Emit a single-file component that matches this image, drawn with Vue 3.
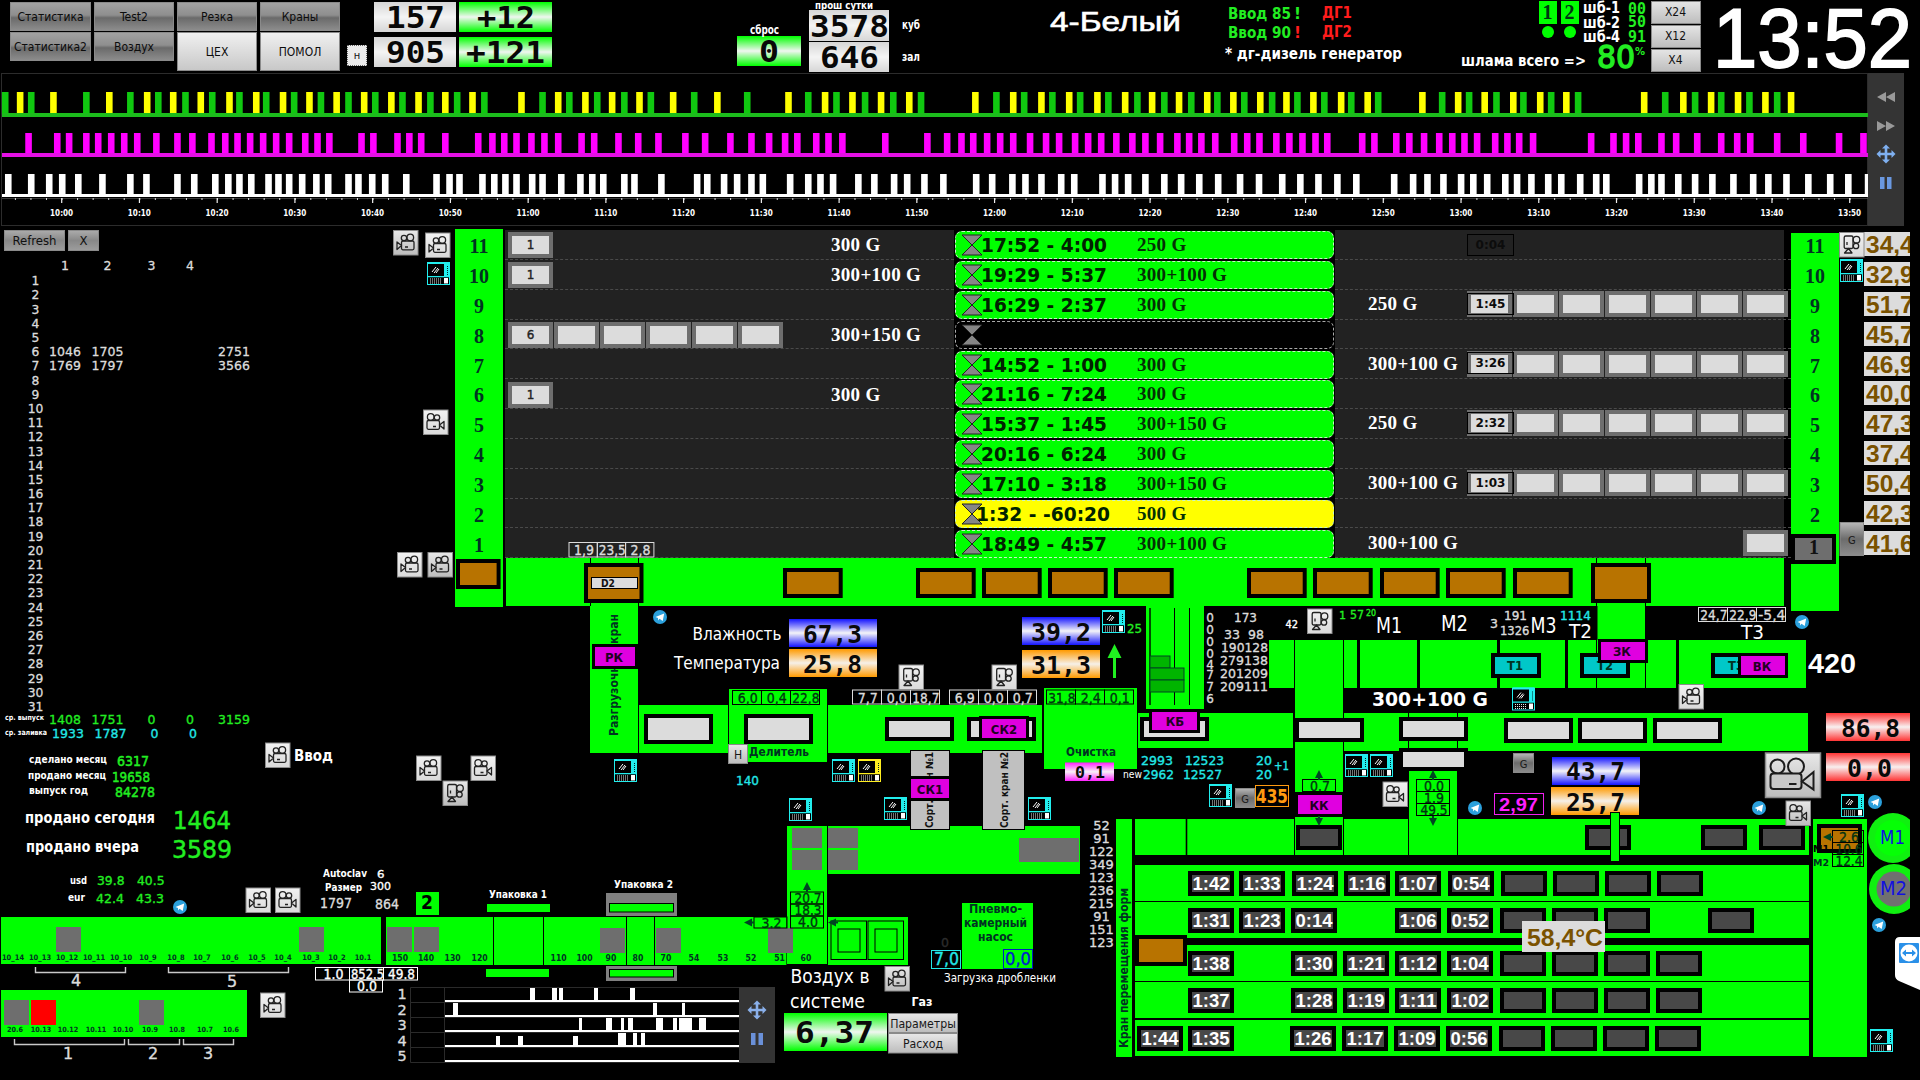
<script setup>
import { h } from 'vue'

/* A label stretched to an exact width, as the panel's fixed-size captions are. */
const Fit = (p) =>
  h('svg', { width: p.w, height: p.h, style: 'display:block;overflow:visible;flex:none' }, [
    h('text', { x: 0, y: p.b ?? p.h, textLength: p.w, lengthAdjust: 'spacingAndGlyphs', fill: 'currentColor', style: `font-size:${p.s}px` }, p.t),
  ])
Fit.props = ['t', 'w', 's', 'h', 'b']

/* ---------- trend ---------- */
const spread = (parts) => parts.flatMap(([offset, scale, xs]) => xs.map((x) => offset + x / scale))
const A = [0, 2.613], B = [600, 2.376], C = [1260, 2.376]
const cycle = spread([
  [...A, [5, 44, 73, 131, 217, 277, 332, 376, 405, 444, 476, 516, 546, 591, 617, 661, 687, 731, 760, 800, 830, 871, 902, 943, 972, 1014, 1043, 1085, 1116, 1155, 1186, 1226, 1257, 1354, 1409, 1450, 1479, 1521, 1552]],
  [...B, [21, 50, 86, 113, 166, 216, 271, 342, 440, 487, 527, 554, 592, 622, 660, 689, 727, 755, 884, 934, 974, 1000, 1041, 1067, 1107, 1133, 1174, 1200, 1240, 1269, 1304, 1333, 1368, 1397, 1435, 1459, 1497, 1523, 1561]],
  [...C, [21, 55, 81, 119, 145, 185, 209, 248, 273, 378, 425, 463, 489, 526, 554, 594, 618, 658, 684, 720, 748, 905, 955, 998, 1026, 1064, 1088, 1128, 1155, 1193, 1221, 1254]],
])
const magenta = spread([
  [...A, [66, 141, 172, 217, 248, 282, 316, 350, 400, 455, 494, 544, 580, 612, 645, 679, 713, 747, 789, 821, 852, 936, 967, 1030, 1061, 1092, 1155, 1241, 1278, 1309, 1341, 1380, 1414, 1450, 1511, 1544]],
  [...B, [36, 83, 131, 195, 242, 302, 352, 394, 432, 461, 506, 535, 568, 670, 770, 817, 851, 879, 912, 943, 974, 1014, 1052, 1083, 1121, 1152, 1183, 1219, 1257, 1288, 1323, 1364, 1392, 1421, 1454, 1499, 1530, 1559]],
  [...C, [31, 62, 93, 124, 152, 235, 264, 316, 347, 382, 418, 449, 478, 508, 551, 580, 608, 641, 779, 832, 862, 891, 946, 981, 1031, 1088, 1126, 1157, 1221, 1283, 1368, 1426]],
])
const white = spread([
  [...A, [13, 73, 120, 154, 196, 259, 332, 374, 455, 499, 554, 588, 617, 648, 693, 719, 747, 781, 818, 849, 902, 928, 964, 998, 1053, 1132, 1166, 1192, 1252, 1283, 1312, 1341, 1382, 1409, 1458, 1508, 1539]],
  [...B, [0, 50, 74, 138, 223, 247, 287, 318, 352, 379, 444, 487, 516, 546, 606, 644, 691, 722, 763, 808, 886, 924, 972, 1003, 1041, 1088, 1119, 1186, 1216, 1247, 1288, 1333, 1373, 1416, 1461, 1513, 1558]],
  [...C, [45, 88, 131, 176, 221, 311, 356, 390, 428, 470, 499, 532, 575, 603, 637, 677, 708, 753, 791, 815, 893, 922, 946, 986, 1026, 1067, 1117, 1164, 1200, 1243, 1295, 1347, 1390, 1437]],
])
const hours = Array.from({ length: 24 }, (_, i) => ({
  x: 61.6 + i * 77.74,
  t: `${10 + Math.floor(i / 6)}:${i % 6}0`,
}))
const minors = Array.from({ length: 119 }, (_, i) => 14.9 + i * 15.548)

/* ---------- monthly table ---------- */
const days = Array.from({ length: 31 }, (_, i) => {
  const d = { n: i + 1, v: ['', '', '', '', ''] }
  if (i === 5) d.v = ['1046', '1705', '', '', '2751']
  if (i === 6) d.v = ['1769', '1797', '', '', '3566']
  return d
})
const totals = [
  { pad: 29, l: 'сделано месяц', lw: 78, ls: 11, gap: 10, v: '6317', vw: 32, vs: 14, h: 16 },
  { pad: 28, l: 'продано месяц', lw: 78, ls: 11, gap: 6, v: '19658', vw: 38, vs: 14, h: 16 },
  { pad: 29, l: 'выпуск год', lw: 59, ls: 11, gap: 27, v: '84278', vw: 40, vs: 14, h: 15 },
  { pad: 25, l: 'продано сегодня', lw: 130, ls: 16, gap: 18, v: '1464', vw: 58, vs: 24.5, h: 32 },
  { pad: 26, l: 'продано вчера', lw: 113, ls: 16, gap: 33, v: '3589', vw: 60, vs: 24.5, h: 29 },
]

/* ---------- autoclaves ---------- */
const autoclaves = [
  { n: 11, cells: 1, first: '1', load: '300 G', time: '17:52 - 4:00', mid: '250 G', badge: '0:04', out: 0, temp: '34,4' },
  { n: 10, cells: 1, first: '1', load: '300+100 G', time: '19:29 - 5:37', mid: '300+100 G', out: 0, temp: '32,9' },
  { n: 9, cells: 0, time: '16:29 - 2:37', mid: '300 G', unload: '250 G', badge: '1:45', out: 7, temp: '51,7' },
  { n: 8, cells: 6, first: '6', load: '300+150 G', time: '', mid: '', out: 0, temp: '45,7' },
  { n: 7, cells: 0, time: '14:52 - 1:00', mid: '300 G', unload: '300+100 G', badge: '3:26', out: 7, temp: '46,9' },
  { n: 6, cells: 1, first: '1', load: '300 G', time: '21:16 - 7:24', mid: '300 G', out: 0, temp: '40,0' },
  { n: 5, cells: 0, time: '15:37 - 1:45', mid: '300+150 G', unload: '250 G', badge: '2:32', out: 7, temp: '47,3' },
  { n: 4, cells: 0, time: '20:16 - 6:24', mid: '300 G', out: 0, temp: '37,4' },
  { n: 3, cells: 0, time: '17:10 - 3:18', mid: '300+150 G', unload: '300+100 G', badge: '1:03', out: 7, temp: '50,4' },
  { n: 2, cells: 0, time: '1:32 - -60:20', mid: '500 G', out: 0, temp: '42,3' },
  { n: 1, cells: 0, time: '18:49 - 4:57', mid: '300+100 G', unload: '300+100 G', out: 1, temp: '41,6' },
]

/* ---------- mimic ---------- */
const L = '#00ff00', K = '#000', G = '#6e6e6e', W = '#dcdcdc', BR = '#b87300', MG = '#e000e0', CY = '#00c8c8', D = '#484848'
/* x, y, right, bottom, fill */
const areas = [
  [506, 558, 1784, 606, L], [1784, 558, 1791, 611, K],
  [590, 603, 638, 753, L], [639, 705, 728, 753, L], [729, 689, 827, 762, L], [828, 705, 1042, 753, L], [1044, 688, 1137, 769, L],
  [787, 826, 827, 964, L], [828, 826, 1080, 874, L], [386, 917, 786.4, 965, L], [828, 917, 908, 965, L], [1, 917, 381, 964, L], [1, 990, 247, 1037, L],
  [416, 892, 439, 915, L], [962, 903, 1033, 969, L], [1116, 819, 1132, 1057, L],
  [1146, 603.5, 1204, 709, L], [1269, 640, 1294, 688, L], [1344, 640, 1357, 688, L], [1360, 640, 1417, 688, L], [1420, 640, 1497, 688, L], [1500, 640, 1565, 688, L],
  [1568, 640, 1676, 688, L], [1679, 640, 1806, 688, L], [1597.5, 603, 1645, 688, L],
  [1138, 713, 1293, 748, L], [1344, 713, 1808, 751, L],
  [1135, 819, 1809, 855, L], [1135, 865, 1809, 901, L], [1135, 902, 1809, 938, L], [1135, 945, 1809, 981, L], [1135, 982, 1809, 1018, L], [1135, 1020, 1809, 1056, L],
  [1295, 640, 1343.5, 855, L], [1409, 771, 1457, 855, L], [1813, 819, 1867, 1057, L],
  [792, 828, 822, 848, G], [792, 850, 822, 870, G], [828, 828, 858, 848, G], [828, 850, 858, 870, G], [1019, 838, 1079, 862, G],
  [487, 904, 550, 912, L], [486, 969, 549, 977, L], [606, 893, 677, 916, '#808080'], [606, 966, 677, 981, '#808080'],
  [56, 927, 81, 952, G], [299, 927, 324, 952, G], [387, 927, 412, 952, G], [414, 927, 439, 952, G], [600, 928, 625, 953, G], [656, 928, 681, 953, G], [768, 928, 793, 953, G],
  [4, 1000, 29, 1025, G], [31, 1000, 56, 1025, '#ff0000'], [139, 1000, 164, 1025, G],
]
/* x1, y1, x2, y2, width */
const rules = [
  [590.5, 558, 590.5, 606, 1], [638.5, 558, 638.5, 753, 1], [1596.5, 558, 1596.5, 688, 1], [1645.5, 558, 1645.5, 688, 1], [728.5, 705, 728.5, 753, 1],
  [493.5, 917, 493.5, 965, 1], [543.5, 917, 543.5, 965, 1], [626.5, 917, 626.5, 965, 1], [654.5, 917, 654.5, 965, 1],
  [1150, 608, 1150, 705, 1.4], [1174.5, 608, 1174.5, 705, 1], [1189.5, 608, 1189.5, 705, 1],
  [1294.5, 640, 1294.5, 855, 1], [1343.5, 640, 1343.5, 855, 1], [1408.5, 713, 1408.5, 855, 1], [1457.5, 713, 1457.5, 855, 1], [1186.5, 819, 1186.5, 855, 1.6],
]
/* outlined boxes: x, y, right, bottom, fill, stroke, stroke width */
const outlines = [
  [609.5, 903.5, 673.5, 912, L, K, 1], [609.5, 969.5, 673.5, 977, L, K, 1],
  [831, 921, 866.5, 959.5, 'none', K, 1], [838, 929, 860, 952, 'none', K, 1], [868, 921, 903.5, 959.5, 'none', K, 1], [875, 929, 897, 952, 'none', K, 1],
  [1150, 656, 1170, 668, '#00b400', '#042', 1], [1150, 668, 1184, 680, '#00b400', '#042', 1], [1150, 680, 1184, 692, '#00b400', '#042', 1],
  [910.5, 750.5, 949.5, 829.5, '#c0c0c0', K, 1], [982.5, 750.5, 1024.5, 829.5, '#c0c0c0', K, 1],
]
/* vehicles and forms: x, y, w, h, fill */
const boxes = [
  [456, 559, 44.6, 30, BR], [584, 563, 59.5, 40, BR],
  ...[783, 916, 982, 1048, 1114, 1247, 1313, 1380, 1446, 1513].map((x) => [x, 568, 59.7, 30, BR]),
  [1591, 563, 60, 40, BR], [1791, 534, 45, 30, G],
  [644, 714, 69, 30, W], [744, 714, 69, 30, W], [885, 717, 69, 24, W], [967, 717, 69, 24, W], [1140, 717, 69, 24, W],
  [1295, 718, 69, 24, W], [1399, 717, 69, 24, W], [1399, 748, 69, 23, W], [1504, 718, 69, 25, W], [1578, 718, 69, 25, W], [1653, 718, 69, 25, W],
  [1491, 653, 50, 25, CY], [1580, 653, 50, 25, CY], [1711, 653, 50, 25, CY],
  [1135, 935, 52, 31, BR], [1817, 824, 45, 29, BR],
  [1296, 825, 46, 25, D], [1585, 825, 46, 25, D], [1701, 825, 46, 25, D], [1759, 825, 46, 25, D],
]
const tags = [
  [592, 644, 46, 25, 'РК', 614], [979, 716, 50, 25, 'СК2', 1004], [908, 776, 44, 25, 'СК1', 930], [1149, 709, 51, 24, 'КБ', 1175],
  [1295, 792, 50, 25, 'КК', 1319], [1598, 639, 50, 24, 'ЗК', 1622], [1738, 653, 50, 25, 'ВК', 1762],
]
const mk = (y, xs, ts) => xs.map((x, i) => ({ x, y, t: ts[i] || '' }))
const forms = [
  ...mk(871, [1188, 1239, 1292, 1344, 1395, 1448, 1501, 1553, 1605, 1657], ['1:42', '1:33', '1:24', '1:16', '1:07', '0:54']),
  ...mk(908, [1188, 1239, 1291, 1395, 1447, 1500, 1552, 1604, 1708], ['1:31', '1:23', '0:14', '1:06', '0:52']),
  ...mk(951, [1188, 1291, 1343, 1395, 1447, 1500, 1552, 1604, 1656], ['1:38', '1:30', '1:21', '1:12', '1:04']),
  ...mk(988, [1188, 1291, 1343, 1395, 1447, 1500, 1552, 1604, 1656], ['1:37', '1:28', '1:19', '1:11', '1:02']),
  ...mk(1026, [1137, 1188, 1290, 1342, 1394, 1446, 1499, 1551, 1603, 1655], ['1:44', '1:35', '1:26', '1:17', '1:09', '0:56']),
]
/* gradient readouts: x, y, right, bottom, gradient, value, text x, text width, baseline, size */
const readouts = [
  [789, 619, 877, 647, 'blue', '67,3', 803, 59, 643, 25], [789, 649, 877, 677, 'orange', '25,8', 803, 59, 673, 25],
  [1022, 617, 1100, 645, 'blue', '39,2', 1031, 60, 641, 25], [1022, 650, 1100, 678, 'orange', '31,3', 1031, 60, 674, 25],
  [1065, 762.5, 1114, 781, 'pink', '0,1', 1075, 30, 777.5, 16],
  [1552, 757, 1640, 785, 'blue', '43,7', 1566, 59, 780, 25], [1551, 787, 1639, 815, 'orange', '25,7', 1566, 59, 811, 25],
  [1826, 713, 1910, 741, 'red', '86,8', 1841, 59, 737, 25], [1826, 753, 1910, 781, 'red', '0,0', 1847, 45, 777, 25],
  [784, 1013, 887, 1051, 'green', '6,37', 795, 79, 1043, 30],
]
/* distance meters: x, y, cell w, cell h, values, text colour, line colour */
const meters = [
  [569, 542.5, 28.3, 14.5, ['1,9', '23,5', '2,8'], W, W], [732.5, 690.5, 29, 14, ['6,0', '0,4', '22,8'], '#031', K],
  [852.5, 690, 29, 14, ['7,7', '0,0', '18,7'], W, W], [949.5, 690, 29, 14, ['6,9', '0,0', '0,7'], W, W],
  [1046.5, 690, 29, 14, ['31,8', '2,4', '0,1'], '#031', K], [1698.5, 607.5, 29, 14, ['24,7', '22,9', '-5,4'], W, W],
  [315.5, 967.5, 34, 12.5, ['1.0', '852.5', '49.8'], '#fff', '#fff'], [349.5, 980, 33, 12, ['0.0'], '#fff', '#fff'],
  [790.5, 892, 33, 12, ['20.7'], '#031', K], [790.5, 904, 33, 12, ['18.3'], '#031', K], [790.5, 916, 33, 12, ['4.0'], '#031', K], [754, 917, 33, 11, ['3.2'], '#031', K],
  [1302.5, 779.5, 33, 12, ['0.7'], '#031', K], [1416.5, 779.5, 33, 12, ['0.0'], '#031', K], [1416.5, 791.5, 33, 12, ['1.9'], '#031', K], [1416.5, 803.5, 33, 12, ['49.5'], '#031', K],
  [1832.5, 830.5, 31, 12, ['2.6'], '#031', K], [1832.5, 842.5, 31, 12, ['10.6'], '#031', K], [1832.5, 854.5, 31, 12, ['12.4'], '#031', K],
]
const meterWidth = (t) => (t.length > 4 ? 33 : t.length > 3 ? 27 : 20)
const plain = (cls) => /^v( |$)/.test(cls)
/* x, baseline, text, size, width, font class, fill */
const w = '#fff', s = '#dcdcdc', g = '#22ee22', c = '#22e8e8', dk = '#032'
const texts = [
  [70, 884, 'usd', 11, 17, 'vb', w], [97, 885, '39.8', 13, 27.5, 'v', g], [137, 885, '40.5', 13, 27.5, 'v', g],
  [68, 901, 'eur', 11, 17, 'vb', w], [96, 903, '42.4', 13, 28, 'v', g], [136, 903, '43.3', 13, 28, 'v', g],
  [323, 877, 'Autoclav', 10, 44, 'vb', w], [377, 878, '6', 11, 7.5, 'v', w], [325, 891, 'Размер', 10, 37, 'vb', w], [370, 890, '300', 11, 21, 'v', w],
  [320, 908, '1797', 13.5, 32, 'v', s], [375, 909, '864', 13.5, 24, 'v', s], [421, 909, '2', 19, 12, 'vb', K], [294, 761, 'Ввод', 16, 39, 'tb', w],
  [489, 898, 'Упаковка 1', 10, 58, 'vb', w], [614, 888, 'Упаковка 2', 10, 59, 'vb', w],
  [76, 986, '4', 16, 0, 'v c', s], [232, 987, '5', 16, 0, 'v c', s], [68, 1059, '1', 16, 0, 'v c', s], [153, 1059, '2', 16, 0, 'v c', s], [208, 1059, '3', 16, 0, 'v c', s],
  ...[999, 1014.5, 1030, 1045.5, 1061].map((y, i) => [402, y, String(i + 1), 14.5, 0, 'v c', s]),
  ...[['10_14', 13], ['10_13', 40], ['10_12', 67], ['10_11', 94], ['10_10', 121], ['10_9', 148], ['10_8', 176], ['10_7', 202], ['10_6', 230], ['10_5', 257], ['10_4', 283], ['10_3', 311], ['10_2', 337], ['10.1', 363]].map(([t, x]) => [x, 960, t, 7.5, 0, 'tb c', dk]),
  ...[['20.6', 15], ['10.13', 41], ['10.12', 68], ['10.11', 96], ['10.10', 123], ['10.9', 150], ['10.8', 177], ['10.7', 205], ['10.6', 231]].map(([t, x]) => [x, 1032, t, 7.2, 0, 'tb c', dk]),
  ...[['150', 400], ['140', 426], ['130', 452.6], ['120', 479.6], ['110', 558.6], ['100', 584.5], ['90', 611], ['80', 638], ['70', 666], ['54', 694], ['53', 723], ['52', 751], ['51', 779.6], ['60', 806]].map(([t, x]) => [x, 960.5, t, 8.6, 0, 'tb c', dk]),
  [692.5, 639.5, 'Влажность', 18, 89, 't', w], [674, 668.5, 'Температура', 18, 106, 't', w], [1127, 633, '25', 13, 15, 'v', g],
  [749, 756, 'Делитель', 13, 60, 'tb', dk], [736, 785, '140', 13, 23, 'v', c], [1066, 755.5, 'Очистка', 13, 50, 'tb', dk],
  [1123, 778, 'new', 10, 19, 't', w], [1141, 765, '2993', 13, 32, 'v', c], [1185, 765, '12523', 13, 39, 'v', c], [1143, 779, '2962', 13, 31, 'v', c], [1183, 779, '12527', 13, 39, 'v', c],
  [1256, 765, '20', 13, 16, 'v', c], [1256, 779, '20', 13, 16, 'v', c], [1274, 770, '+1', 12, 15, 'v', c],
  [790.5, 983, 'Воздух в', 20, 79, 't', w], [790, 1008, 'системе', 20, 75, 't', w], [911.5, 1006, 'Газ', 13, 21, 'tb', w],
  [969, 913, 'Пневмо-', 13, 53, 'tb', dk], [964, 927, 'камерный', 13, 63, 'tb', dk], [978, 941, 'насос', 13, 35, 'tb', dk], [941, 947, '0', 13, 8, 'v', '#2c2c2c'],
  [944, 982, 'Загрузка дробленки', 12, 112, 't', w],
  ...[52, 91, 122, 349, 123, 236, 215, 91, 151, 123].map((n, i) => [1101.5, 830 + i * 13, String(n), 13, 0, 'v c', s]),
  ...[['0', 622], ['0', 634], ['0', 646], ['0', 658], ['4', 669], ['7', 679], ['7', 691], ['6', 703]].map(([t, y]) => [1210, y, t, 12, 0, 'v c', s]),
  [1234, 622, '173', 13, 23, 'v', s], [1224, 639, '33', 13, 16, 'v', s], [1248, 639, '98', 13, 16, 'v', s], [1221, 652, '190128', 13, 47, 'v', s], [1220, 665, '279138', 13, 48, 'v', s],
  [1220, 678, '201209', 13, 48, 'v', s], [1220, 691, '209111', 13, 48, 'v', s], [1285.5, 628, '42', 10, 12.5, 'v', w],
  [1339, 619, '1', 11, 7, 'v', g], [1350, 619, '57', 11.5, 14, 'v', g], [1366, 616, '20', 8, 10, 'v', g],
  [1376, 633, 'M1', 20.5, 26, 't', w], [1441, 631, 'M2', 20.5, 27, 't', w], [1490, 628, '3', 12, 8, 'v', s], [1504, 620, '191', 12, 23, 'v', s], [1500, 635, '1326', 12, 29.5, 'v', s],
  [1530.5, 633, 'M3', 20.5, 26, 't', w], [1560, 620, '1114', 12, 31, 'v', c], [1569, 638, 'T2', 20, 23, 't', w], [1741, 639, 'T3', 20, 23, 't', w],
  [1507, 670, 'Т1', 13, 16, 'tb', dk], [1597, 670, 'Т2', 13, 16, 'tb', dk], [1728, 670, 'Т3', 13, 16, 'tb', dk],
  [1808, 673, '420', 27, 48, 'ab', w], [1372, 706, '300+100 G', 19, 116, 'vb', w],
  [1813, 852, 'M1', 9, 16, 'tb', K], [1813, 866, 'M2', 9, 16, 'tb', dk],
]
const cams = [
  [393, 230, 'l', 1], [425, 232.5, 'l', 0], [423, 409.5, 'r', 0], [397, 552, 'l', 0], [427.5, 552, 'l', 1], [265, 742.5, 'l', 0], [416, 755.5, 'l', 0], [470.5, 755.5, 'r', 0], [442.5, 780.5, 'd', 1],
  [245.5, 887.5, 'l', 0], [275, 887.5, 'r', 0], [260, 992.5, 'l', 0], [898.5, 664.5, 'd', 0], [991.5, 664.5, 'd', 0], [884.5, 966, 'l', 1], [1382.5, 781.5, 'r', 0], [1678.5, 684, 'l', 0], [1785.5, 800.5, 'r', 1],
  [1307, 608.5, 'd', 0], [1839, 232, 'd', 0],
]
const camTurn = { l: '', r: 'translate(25 0) scale(-1 1)', d: 'translate(25 0) rotate(90) translate(25 0) scale(-1 1)' }
const terms = [[427, 262], [1840, 259], [614, 759], [789, 798], [832, 759], [858, 759, '#ffee20'], [884, 797], [1028, 797], [1102, 610], [1345, 754], [1370, 754], [1209, 784], [1512, 687.5], [1841, 794], [1870, 1029]]
const planes = [[180, 907], [660, 617], [1475, 808], [1802, 622], [1759, 808], [1875, 802], [1879, 925]]
const keys = [
  [728, 744, 20, 20, 'Н', 12, 'k2'], [1235, 788, 20, 20, 'G', 11, 'k1'], [1513, 753, 21, 20, 'G', 11, 'k1'], [1839.5, 522, 24.5, 34, 'G', 11, 'k1'],
  [888, 1013, 70, 20, 'Параметры', 12.2, 'k2'], [888, 1033, 70, 20.5, 'Расход', 12.2, 'k2'],
]
const up = (x, y) => `M${x} ${y}l4 8h-3v2h-2v-2h-3z`
const down = (x, y) => `M${x} ${y}l4 -8h-3v-2h-2v2h-3z`
const left = (x, y) => `M${x} ${y}l8 -4v3h2v2h-2v3z`
const arrows = [up(807, 882), up(1319, 770), down(1319, 826), up(1433, 770), down(1433, 826), left(744, 922.5), left(828, 922.5), left(1823, 837)]
const brackets = [[35, 126, 967], [168, 289, 967], [14, 125, 1039], [128, 180, 1039], [183, 234, 1039]]
const mini = [
  [[270, 15], [336, 15], [357, 12], [462, 12], [570, 15]],
  [[39, 15], [639, 12], [726, 9]],
  [[417, 9], [498, 18], [543, 9], [564, 15], [648, 21], [699, 12], [717, 39], [777, 21]],
  [[168, 12, 1], [234, 15, 1], [399, 15, 1], [534, 24], [579, 12], [603, 12]],
  [],
]
</script>

<template>
  <div class="screen">
    <header class="top">
      <nav class="nav">
        <button class="nb dark">Статистика</button><button class="nb dark">Test2</button><button class="nb dark">Резка</button><button class="nb dark">Краны</button>
        <button class="nb dark">Статистика2</button><button class="nb dark">Воздух</button><button class="nb tall">ЦЕХ</button><button class="nb tall">ПОМОЛ</button>
      </nav>
      <button class="hkey">н</button>
      <div class="counters mono">
        <div class="ro silver"><Fit t="157" :w="59" :s="29.500" :h="30" :b="26" /></div>
        <div class="ro lime"><Fit t="+12" :w="58" :s="29.500" :h="30" :b="26" /></div>
        <div class="ro silver"><Fit t="905" :w="59" :s="29.500" :h="30" :b="26" /></div>
        <div class="ro lime"><Fit t="+121" :w="79" :s="29.500" :h="30" :b="26" /></div>
      </div>
      <div class="reset">
        <Fit class="cap" t="сброс" :w="29" :s="12" :h="11" :b="9" />
        <div class="ro lime mono"><Fit t="0" :w="20" :s="30" :h="30" :b="26" /></div>
      </div>
      <div class="prev">
        <Fit class="cap" t="прош сутки" :w="58" :s="11" :h="10" :b="8.500" />
        <div class="ro silver mono"><Fit t="3578" :w="79" :s="30" :h="31" :b="27" /></div>
        <div class="ro silver mono"><Fit t="646" :w="59" :s="30" :h="30" :b="26" /></div>
      </div>
      <div class="units"><Fit t="куб" :w="18" :s="12" :h="29" /><Fit t="зал" :w="18" :s="12" :h="32" /></div>
      <div class="product"><Fit t="4-Белый" :w="131" :s="28" :h="30.500" /></div>
      <div class="gens">
        <p><span class="gr"><Fit t="Ввод 85" :w="63" :s="15.500" :h="19" /></span><span class="gr"><Fit t="!" :w="7" :s="15.500" :h="19" /></span><span class="rd"><Fit t="ДГ1" :w="30" :s="15.500" :h="18" /></span></p>
        <p><span class="gr"><Fit t="Ввод 90" :w="63" :s="15.500" :h="19" /></span><span class="rd"><Fit t="!" :w="7" :s="15.500" :h="19" /></span><span class="rd"><Fit t="ДГ2" :w="30" :s="15.500" :h="18" /></span></p>
        <Fit class="note" t="* дг-дизель генератор" :w="177" :s="15" :h="22" :b="21" />
      </div>
      <div class="slurry">
        <div class="pumps">
          <div class="pump"><b>1</b><i></i></div>
          <div class="pump"><b>2</b><i></i></div>
          <div class="levels">
            <p><Fit t="шб-1" :w="37" :s="15" :h="13" /><span class="mono gr"><Fit t="00" :w="18" :s="15" :h="14" /></span></p>
            <p><Fit t="шб-2" :w="37" :s="15" :h="13.500" /><span class="mono gr"><Fit t="50" :w="18" :s="15" :h="13" /></span></p>
            <p><Fit t="шб-4" :w="37" :s="15" :h="14" /><span class="mono gr"><Fit t="91" :w="18" :s="15" :h="14" /></span></p>
          </div>
        </div>
        <div class="sum"><Fit t="шлама всего =>" :w="125" :s="15" :h="25" /><span class="gr big"><Fit t="80" :w="38" :s="32" :h="27" /></span><span class="gr"><Fit t="%" :w="10" :s="11" :h="14" /></span></div>
      </div>
      <div class="zoom"><button>X24</button><button>X12</button><button>X4</button></div>
      <div class="clock"><Fit t="13:52" :w="199" :s="83" :h="67" /></div>
    </header>

    <section class="trend">
      <svg class="plot" width="1868" height="153" viewBox="0 73 1868 153">
        <rect x="1.500" y="73.500" width="1866" height="152" fill="#000" stroke="#2c2c2c" />
        <rect v-for="(x, i) in cycle" :key="'c' + i" :x="x" y="92" width="6.600" height="22" :fill="i % 2 ? '#ffff00' : '#10c810'" />
        <rect x="2" y="113" width="1866" height="4" fill="#1cbc1c" />
        <rect v-for="(x, i) in magenta" :key="'m' + i" :x="x" y="133" width="6.600" height="21" fill="#ff00ff" />
        <rect x="2" y="153" width="1866" height="4" fill="#e410e4" />
        <rect v-for="(x, i) in white" :key="'w' + i" :x="x" y="174" width="6.600" height="21" fill="#fff" />
        <rect x="2" y="194" width="1866" height="3" fill="#fff" />
        <rect x="2" y="198" width="1866" height="0.700" fill="#555" />
        <rect v-for="(x, i) in minors" :key="'n' + i" :x="x" y="198" width="1" height="2" fill="#ddd" />
        <g v-for="t in hours" :key="t.t">
          <rect :x="t.x - 0.500" y="198" width="1.200" height="5" fill="#eee" />
          <text :x="t.x - 11.500" y="216" textLength="23" lengthAdjust="spacingAndGlyphs" class="tb" font-size="8.600" fill="#fff">{{ t.t }}</text>
        </g>
      </svg>
      <div class="tools">
        <svg width="20" height="14" viewBox="0 0 20 14"><path d="M10 2v10L1 7zM19 2v10L10 7z" fill="#999" /></svg>
        <svg width="20" height="14" viewBox="0 0 20 14"><path d="M1 2v10l9-5zM10 2v10l9-5z" fill="#999" /></svg>
        <svg width="20" height="20" viewBox="-10 -10 20 20"><path d="M0-9.500l4 4H1.300v4.200H5.500V-4L9.500 0l-4 4V1.300H1.300v4.200H4L0 9.500l-4-4h2.700V1.300H-5.500V4l-4-4 4-4v2.700h4.200v-4.200H-4z" fill="#7fb0f0" /></svg>
        <svg width="12" height="14" viewBox="0 0 12 14"><path d="M0 1h4.500v12H0zM7 1h4.500v12H7z" fill="#6a98e0" /></svg>
      </div>
    </section>

    <main class="stage">
      <aside class="stats">
        <div class="bar"><button class="mini-btn refresh">Refresh</button><button class="mini-btn ex">X</button></div>
        <div class="grid-row head"><span></span><span>1</span><span>2</span><span>3</span><span>4</span><span></span></div>
        <div v-for="d in days" :key="d.n" class="grid-row"><span>{{ d.n }}</span><span v-for="(v, i) in d.v" :key="i" class="val">{{ v }}</span></div>
        <div class="avg">
          <Fit class="tiny" t="ср. выпуск" :w="39" :s="7.500" :h="10" />
          <div class="grid-row gr"><span>1408</span><span>1751</span><span>0</span><span>0</span><span>3159</span></div>
        </div>
        <div class="avg">
          <Fit class="tiny" t="ср. заливка" :w="42" :s="7.500" :h="10" />
          <div class="grid-row cy"><span>1933</span><span>1787</span><span>0</span><span>0</span><span></span></div>
        </div>
        <div class="totals">
          <div v-for="t in totals" :key="t.l" class="total" :style="{ height: t.h + 'px', paddingLeft: t.pad + 'px', gap: t.gap + 'px' }">
            <span class="lab"><Fit :t="t.l" :w="t.lw" :s="t.ls" :h="t.h" :b="t.h - (t.vs > 20 ? 6 : 3)" /></span>
            <span class="num"><Fit :t="t.v" :w="t.vw" :s="t.vs" :h="t.h" /></span>
          </div>
        </div>
      </aside>

      <section class="clave">
        <div class="ids left"><span v-for="a in autoclaves" :key="a.n">{{ a.n }}</span></div>
        <div class="lane in">
          <div v-for="a in autoclaves" :key="a.n" class="row">
            <i v-for="k in a.cells" :key="k" class="cell">{{ k === 1 ? a.first : '' }}</i>
            <b class="lbl">{{ a.load }}</b>
          </div>
        </div>
        <div class="mid">
          <div v-for="a in autoclaves" :key="a.n" class="pill" :class="{ off: !a.time, warn: a.n === 2 }">
            <svg width="22" height="22" viewBox="0 0 22 22"><path d="M1 1h20L1 21h20z" fill="#868686" stroke="#222" /></svg>
            <span class="time"><Fit v-if="a.time" :t="a.time" :w="a.n === 2 ? 134 : 126" :s="18.600" :h="22" :b="18" /></span>
            <b class="lbl">{{ a.mid }}</b>
          </div>
        </div>
        <div class="lane out">
          <div v-for="a in autoclaves" :key="a.n" class="row">
            <b class="lbl">{{ a.unload }}</b>
            <div class="cells" :class="{ tail: a.out === 1 }"><i v-for="k in a.out" :key="k" class="cell"></i></div>
            <em v-if="a.badge" class="badge" :class="{ ghost: !a.out }">{{ a.badge }}</em>
          </div>
        </div>
        <div class="ids right"><span v-for="a in autoclaves" :key="a.n">{{ a.n === 1 ? '' : a.n }}</span></div>
        <div class="temps"><span v-for="a in autoclaves" :key="a.n">{{ a.temp }}</span></div>
      </section>

      <svg class="mimic" width="1920" height="854" viewBox="0 226 1920 854">
        <defs>
          <linearGradient id="blue" x2="0" y2="1"><stop offset="0" stop-color="#1414ff" /><stop offset=".5" stop-color="#f4f4f8" /><stop offset="1" stop-color="#1414ff" /></linearGradient>
          <linearGradient id="orange" x2="0" y2="1"><stop offset="0" stop-color="#ff9a00" /><stop offset=".5" stop-color="#f6f0e8" /><stop offset="1" stop-color="#ff9a00" /></linearGradient>
          <linearGradient id="pink" x2="0" y2="1"><stop offset="0" stop-color="#ff20ff" /><stop offset=".5" stop-color="#f8f0f8" /><stop offset="1" stop-color="#ff20ff" /></linearGradient>
          <linearGradient id="red" x2="0" y2="1"><stop offset="0" stop-color="#ff3434" /><stop offset=".5" stop-color="#f8f0f0" /><stop offset="1" stop-color="#ff3434" /></linearGradient>
          <linearGradient id="green" x2="0" y2="1"><stop offset="0" stop-color="#00ff00" /><stop offset=".5" stop-color="#f0f6f0" /><stop offset="1" stop-color="#00ff00" /></linearGradient>
          <linearGradient id="k0" x2="0" y2="1"><stop offset="0" stop-color="#f2f2f2" /><stop offset="1" stop-color="#dadada" /></linearGradient>
          <linearGradient id="k1" x2="0" y2="1"><stop offset="0" stop-color="#b8b8b8" /><stop offset=".5" stop-color="#6c6c6c" /><stop offset="1" stop-color="#8c8c8c" /></linearGradient>
          <linearGradient id="k2" x2="0" y2="1"><stop offset="0" stop-color="#e8e8e8" /><stop offset="1" stop-color="#bcbcbc" /></linearGradient>
          <symbol id="cam" viewBox="0 0 25 25">
            <g fill="none" stroke="#222" stroke-width="1.300" stroke-linejoin="round">
              <circle cx="11" cy="8" r="2.700" /><circle cx="17.300" cy="7.500" r="3.300" />
              <rect x="8.500" y="11" width="12.500" height="8.800" rx="1.500" /><path d="M8.500 15.500L4 12v7.500zM12 17h3" />
            </g>
          </symbol>
        </defs>

        <rect v-for="(a, i) in areas" :key="'a' + i" :x="a[0]" :y="a[1]" :width="a[2] - a[0]" :height="a[3] - a[1]" :fill="a[4]" />
        <line v-for="(r, i) in rules" :key="'r' + i" :x1="r[0]" :y1="r[1]" :x2="r[2]" :y2="r[3]" :stroke-width="r[4]" stroke="#000" />
        <rect v-for="(o, i) in outlines" :key="'o' + i" :x="o[0]" :y="o[1]" :width="o[2] - o[0]" :height="o[3] - o[1]" :fill="o[4]" :stroke="o[5]" :stroke-width="o[6]" />
        <rect v-for="(b, i) in boxes" :key="'b' + i" :x="b[0] + 2" :y="b[1] + 2" :width="b[2] - 4" :height="b[3] - 4" :fill="b[4]" stroke="#000" stroke-width="4" />
        <g v-for="(f, i) in forms" :key="'f' + i">
          <rect :x="f.x + 2" :y="f.y + 2" width="42" height="21" fill="#484848" stroke="#000" stroke-width="4" />
          <text v-if="f.t" :x="f.x + 4.500" :y="f.y + 18.500" textLength="37" lengthAdjust="spacingAndGlyphs" class="ab" font-size="17.500" fill="#fff">{{ f.t }}</text>
        </g>
        <rect x="1610.500" y="812.500" width="9" height="49" fill="#00ff00" stroke="#000" />
        <text x="1814" y="554" text-anchor="middle" class="s" font-size="20" fill="#111">1</text>

        <g v-for="(m, i) in meters" :key="'d' + i">
          <g v-for="(t, j) in m[4]" :key="j">
            <rect :x="m[0] + j * m[2]" :y="m[1]" :width="m[2]" :height="m[3]" fill="none" :stroke="m[6]" />
            <text :x="m[0] + (j + 0.530) * m[2] - meterWidth(t) / 2" :y="m[1] + (m[3] > 13 ? 12.500 : 11)" :textLength="meterWidth(t)" lengthAdjust="spacingAndGlyphs" class="v" font-size="13.500" :fill="m[5]" :stroke="m[5]">{{ t }}</text>
          </g>
        </g>
        <rect x="591.500" y="577.500" width="46" height="11" fill="#dcdcdc" stroke="#000" />
        <text x="601" y="587" textLength="14" lengthAdjust="spacingAndGlyphs" class="vb" font-size="10" fill="#111">D2</text>

        <text transform="translate(618 736) rotate(-90)" textLength="122" lengthAdjust="spacingAndGlyphs" class="tb" font-size="13" fill="#032">Разгрузочный кран</text>
        <text transform="translate(933 828) rotate(-90)" textLength="76" lengthAdjust="spacingAndGlyphs" class="vb" font-size="10" fill="#111">Сорт. кран №1</text>
        <text transform="translate(1008 828) rotate(-90)" textLength="76" lengthAdjust="spacingAndGlyphs" class="vb" font-size="10" fill="#111">Сорт. кран №2</text>
        <text transform="translate(1128 1048) rotate(-90)" textLength="160" lengthAdjust="spacingAndGlyphs" class="tb" font-size="12.500" fill="#032">Кран перемещения форм</text>

        <text v-for="(t, i) in texts" :key="'t' + i" :x="t[0]" :y="t[1]" :font-size="t[3]" :textLength="t[4] || undefined" lengthAdjust="spacingAndGlyphs" :class="t[5]" :fill="t[6]" :stroke="plain(t[5]) ? t[6] : undefined">{{ t[2] }}</text>

        <g v-for="t in tags" :key="t[4]">
          <rect :x="t[0] + 1.500" :y="t[1] + 1.500" :width="t[2] - 3" :height="t[3] - 3" :fill="MG" stroke="#000" stroke-width="3" />
          <text :x="t[5]" :y="t[1] + t[3] / 2 + 5" text-anchor="middle" class="tb" font-size="13" fill="#202">{{ t[4] }}</text>
        </g>

        <g v-for="(r, i) in readouts" :key="'g' + i">
          <rect :x="r[0]" :y="r[1]" :width="r[2] - r[0]" :height="r[3] - r[1]" :fill="`url(#${r[4]})`" />
          <text :x="r[6]" :y="r[8]" :textLength="r[7]" lengthAdjust="spacingAndGlyphs" class="m" :font-size="r[9]" fill="#0a0a0a">{{ r[5] }}</text>
        </g>
        <rect x="1610.500" y="812.500" width="9" height="10" fill="#00ff00" stroke="#000" />
        <rect x="1611" y="815" width="8" height="10" fill="#00ff00" />

        <rect x="1522" y="921" width="83" height="31" fill="#dcdcdc" />
        <text x="1527" y="946" textLength="76" lengthAdjust="spacingAndGlyphs" class="ab" font-size="24.500" fill="#7a5200">58,4°C</text>
        <rect x="1255.500" y="785.500" width="33" height="21" fill="#000" stroke="#ff9a10" />
        <text x="1256" y="803" textLength="32" lengthAdjust="spacingAndGlyphs" class="tb" font-size="20" fill="#ff9a10">435</text>
        <rect x="1494.500" y="793.500" width="49" height="21" fill="#000" stroke="#f020f0" />
        <text x="1499" y="811" textLength="39" lengthAdjust="spacingAndGlyphs" class="ab" font-size="19" fill="#ff20ff">2,97</text>
        <rect x="931.500" y="950.500" width="29" height="18" fill="#000" stroke="#22e8e8" />
        <text x="934" y="965" textLength="25" lengthAdjust="spacingAndGlyphs" class="v" font-size="17" fill="#22e8e8" stroke="#22e8e8">7,0</text>
        <rect x="1003.500" y="949.500" width="29" height="19" fill="none" stroke="#0020c0" />
        <text x="1005" y="965" textLength="26" lengthAdjust="spacingAndGlyphs" class="v" font-size="17" fill="#0020d0" stroke="#0020d0">0,0</text>

        <path v-for="(a, i) in arrows" :key="'w' + i" :d="a" fill="#042" />
        <path d="M1114.500 644l7 14h-5.500v20h-3v-20h-5.500z" fill="#20f020" />
        <path v-for="(b, i) in brackets" :key="'k' + i" :d="`M${b[0] + 0.500} ${b[2]}v5.500H${b[1] - 0.500}v-5.500`" fill="none" stroke="#c8c8c8" stroke-width="1.400" />

        <g v-for="(row, i) in mini" :key="'i' + i">
          <path :d="`M410.500 ${987.500 + i * 15}H739M410.500 ${1002.500 + i * 15}H739M410.500 ${987.500 + i * 15}v15M444.500 ${987.500 + i * 15}v15`" fill="none" stroke="#2a2a2a" />
          <rect x="445" :y="1000 + i * 15" width="294" height="2" fill="#fff" />
          <rect v-for="(b, j) in row" :key="j" :x="440 + b[0] / 3" :y="988 + i * 15 + (b[2] ? 3 : 0)" :width="b[1] / 3" :height="b[2] ? 9 : 12" fill="#fff" />
        </g>
        <rect x="739" y="987" width="36" height="76" fill="#343434" />
        <path transform="translate(757 1010)" d="M0-9.500l4 4H1.300v4.200H5.500V-4L9.500 0l-4 4V1.300H1.300v4.200H4L0 9.500l-4-4h2.700V1.300H-5.500V4l-4-4 4-4v2.700h4.200v-4.200H-4z" fill="#8ab0ea" />
        <path d="M751 1033h4.500v12H751zM758.500 1033h4.500v12h-4.500z" fill="#6a90d8" />

        <g v-for="(k, i) in keys" :key="'y' + i">
          <rect :x="k[0] + 0.500" :y="k[1] + 0.500" :width="k[2] - 1" :height="k[3] - 1" :fill="`url(#${k[6]})`" stroke="#8a8a8a" />
          <text :x="k[0] + k[2] / 2" :y="k[1] + k[3] / 2 + 4.500" text-anchor="middle" class="t" :font-size="k[5]" fill="#181818">{{ k[4] }}</text>
        </g>
        <g v-for="(m, i) in cams" :key="'p' + i" :transform="`translate(${m[0]} ${m[1]})`">
          <rect x=".5" y=".5" width="24.500" height="24.500" :fill="m[3] ? 'url(#k2)' : 'url(#k0)'" stroke="#8c8c8c" />
          <g :transform="camTurn[m[2]]"><use href="#cam" width="25" height="25" /></g>
        </g>
        <g transform="translate(1765 752.500)">
          <rect x=".5" y=".5" width="55" height="44.500" fill="url(#k2)" stroke="#8c8c8c" stroke-width="1.500" />
          <g fill="none" stroke="#1c1c1c" stroke-width="2">
            <circle cx="12.500" cy="14" r="7" /><circle cx="31" cy="14" r="8" />
            <rect x="5.500" y="21" width="31" height="15.500" rx="3" fill="#c8c8c8" /><path d="M37 29l11.500-9.500v17.500zM24 31.500h7.500" />
          </g>
        </g>
        <g v-for="(p, i) in terms" :key="'q' + i" :transform="`translate(${p[0]} ${p[1]})`">
          <rect x=".5" y=".5" width="22" height="22" fill="#000" :stroke="p[2] || '#22eeee'" />
          <path d="M17 1h5v13h-5zM1 14h21v1.200H1zM1 0h21v2H1z" :fill="p[2] || '#22eeee'" />
          <path d="M20.500 4v9" stroke="#022" stroke-dasharray="1 1" />
          <path d="M5 10l4-5M7 11l4-5M9 11l3-4" stroke="#fff" stroke-width="1" fill="none" />
          <path d="M3 17h11M3 19h11M3 21h11" stroke="#e8e8e8" stroke-width="1" stroke-dasharray="1 1" />
          <rect x="17" y="16" width="4" height="5.500" fill="#fff" />
        </g>
        <g v-for="(p, i) in planes" :key="'s' + i" :transform="`translate(${p[0]} ${p[1]})`">
          <circle r="7" fill="#2ba0dc" /><path d="M-4.500 0L4.200-3.500 2.700 4-.5 1.800-1.800 3.500-2 1z" fill="#fff" />
        </g>

        <svg x="1800" y="800" width="110" height="120" viewBox="1800 800 110 120">
          <circle cx="1893" cy="838" r="25" fill="#10f010" /><circle cx="1893" cy="838" r="18" fill="#06ff06" />
          <circle cx="1894" cy="889" r="25" fill="#10f010" /><circle cx="1894" cy="889" r="17.500" fill="#707070" />
        </svg>
        <text x="1880" y="843.500" textLength="25" lengthAdjust="spacingAndGlyphs" class="t" font-size="20" fill="#1010e0">M1</text>
        <text x="1880" y="895" textLength="27" lengthAdjust="spacingAndGlyphs" class="t" font-size="20" fill="#1010e0">M2</text>

        <path d="M1920 937h-20q-5 0-5 5v33q0 4 4 6l21 9z" fill="#fff" />
        <rect x="1899" y="943" width="20" height="20" rx="1" fill="#2a90e8" /><circle cx="1909" cy="953" r="8.500" fill="#fff" />
        <path d="M1902 953l4-3.500v2.500h6v-2.500l4 3.500-4 3.500v-2.500h-6v2.500z" fill="#2a90e8" />
      </svg>
    </main>
  </div>
</template>

<style>
html,
body {
  background: #000;
  overflow: hidden;
}
</style>

<style scoped>
.screen {
  width: 1920px;
  height: 1080px;
  overflow: hidden;
  background: #000;
  color: #fff;
  font-family: 'DejaVu Sans', sans-serif;
  display: flex;
  flex-direction: column;
}
button {
  padding: 0;
  margin: 0;
  border: 1px solid #8a8a8a;
  border-radius: 0;
  color: #111;
  font-family: 'DejaVu Sans Condensed', 'DejaVu Sans', sans-serif;
  font-size: 12px;
  white-space: nowrap;
}
p {
  margin: 0;
}
.mono {
  font-family: 'DejaVu Sans Mono', monospace;
  font-weight: bold;
}
.gr {
  color: #22ee22;
}
.rd {
  color: #ff1c1c;
}
.cy {
  color: #22e8e8;
}

/* header */
.top {
  height: 73px;
  flex: none;
  display: flex;
  align-items: flex-start;
  font-family: 'DejaVu Sans Condensed', 'DejaVu Sans', sans-serif;
  font-weight: bold;
}
.nav {
  display: grid;
  grid-template-columns: 81px 80px 80px 80px;
  grid-template-rows: 29px 39px;
  gap: 1px 3px;
  margin: 2px 0 0 10px;
  width: 330px;
  align-items: start;
}
.nb {
  height: 29px;
  color: #0c0c0c;
  font-size: 12px;
}
.nb.dark {
  background: linear-gradient(#a2a2a2, #8e8e8e 45%, #6a6a6a 55%, #8c8c8c);
}
.nb.tall {
  height: 39px;
  background: linear-gradient(#f0f0f0, #dcdcdc 50%, #c8c8c8);
}
.hkey {
  margin: 45px 0 0 7px;
  width: 20px;
  height: 21px;
  background: #ececec;
  border: 1px dotted #666;
  font-size: 11px;
}
.counters {
  display: grid;
  grid-template-columns: 82px 93px;
  gap: 5px 3px;
  margin: 2px 0 0 7px;
}
.ro {
  display: flex;
  justify-content: center;
  color: #080808;
}
.silver {
  background: linear-gradient(#d6d6d6, #f4f4f4 50%, #d6d6d6);
}
.lime {
  background: linear-gradient(#00ff00, #f0f6f0 50%, #00ff00);
}
.reset {
  margin: 25px 0 0 185px;
  width: 64px;
}
.reset .cap {
  margin-left: 13px;
}
.prev {
  margin-left: 8px;
  width: 80px;
  display: flex;
  flex-direction: column;
}
.prev .cap {
  margin-left: 6px;
}
.prev .ro + .ro {
  margin-top: 1px;
}
.units {
  margin-left: 13px;
  width: 20px;
}
.product {
  margin-left: 127.5px;
  font-family: 'Liberation Sans', sans-serif;
  font-weight: normal;
  stroke: #fff;
  stroke-width: 0.6px;
}
.gens {
  margin-left: 44px;
  width: 176px;
}
.gens p {
  display: flex;
  height: 19px;
  padding-left: 3px;
}
.gens p span + span {
  margin-left: 3px;
}
.gens p span:last-child {
  margin-left: 21px;
}
.slurry {
  margin-left: 60px;
  width: 187px;
}
.pumps {
  display: flex;
  margin-left: 78px;
  height: 41px;
}
.pump {
  width: 18px;
  margin-right: 4px;
  display: flex;
  flex-direction: column;
  align-items: center;
}
.pump b {
  width: 18px;
  height: 23px;
  line-height: 23px;
  margin-top: 1px;
  background: #00ff00;
  color: #031;
  text-align: center;
  font-family: 'Liberation Serif', serif;
  font-size: 20px;
}
.pump i {
  margin-top: 2px;
  width: 12px;
  height: 12px;
  border-radius: 50%;
  background: #00ff00;
}
.levels {
  width: 66px;
}
.levels p {
  display: flex;
  gap: 8px;
}
.levels p:nth-child(n + 2) {
  height: 13.5px;
}
.sum {
  display: flex;
  height: 30px;
}
.sum .big {
  margin-left: 11px;
  font-weight: normal;
  stroke: #22ee22;
  stroke-width: 1.3px;
}
.zoom {
  margin: 0.5px 0 0 3px;
  width: 50px;
  display: flex;
  flex-direction: column;
  gap: 1px;
}
.zoom button {
  height: 23px;
  line-height: 18px;
  background: linear-gradient(#e4e4e4, #bebebe);
}
.clock {
  margin-left: 12px;
  font-family: 'Liberation Sans', sans-serif;
  font-weight: normal;
  stroke: #fff;
  stroke-width: 1.8px;
}

/* trend */
.trend {
  display: flex;
  height: 153px;
  flex: none;
}
.plot {
  display: block;
}
.tools {
  width: 36px;
  background: #343434;
  display: flex;
  flex-direction: column;
  align-items: center;
  padding-top: 17px;
  gap: 15px;
  box-sizing: border-box;
}
.tools svg:nth-child(3) {
  margin-top: -4px;
}
.tools svg:nth-child(4) {
  margin-top: -3px;
}

/* stage */
.stage {
  position: relative;
  flex: 1;
  display: flex;
  align-items: flex-start;
}
.mimic {
  position: absolute;
  left: 0;
  top: 0;
}
.stats {
  width: 455px;
  flex: none;
}
.bar {
  display: flex;
  gap: 3px;
  padding: 4px 0 0 4px;
  height: 36px;
  box-sizing: border-box;
}
.mini-btn {
  height: 21px;
  background: linear-gradient(#aaa, #888 50%, #9c9c9c);
  font-size: 13px;
}
.refresh {
  width: 61px;
}
.ex {
  width: 31px;
}
.grid-row {
  display: grid;
  grid-template-columns: 27px 32px 53px 35px 42px 46px;
  margin-left: 22px;
  height: 14.2px;
  line-height: 14.2px;
  font-size: 12.3px;
  text-align: center;
  color: #dcdcdc;
  -webkit-text-stroke: 0.3px currentColor;
}
.grid-row.head {
  height: 12.3px;
  line-height: 8px;
  font-size: 12.5px;
}
.val {
  font-size: 12.5px;
}
.avg {
  display: flex;
  align-items: flex-start;
  height: 14.7px;
  padding-left: 5px;
  font-weight: bold;
}
.avg .tiny {
  margin-right: -42px;
  margin-top: -4px;
}
.avg .grid-row {
  grid-template-columns: 32px 53px 35px 42px 46px;
  margin: -1.5px 0 0 47px;
  font-size: 12.5px;
  font-weight: normal;
}
.grid-row.gr {
  color: #22ee22;
}
.grid-row.cy {
  color: #22e8e8;
}
.totals {
  padding-top: 7px;
}
.total {
  display: flex;
}
.lab {
  font-family: 'DejaVu Sans Condensed', 'DejaVu Sans', sans-serif;
  font-weight: bold;
}
.num {
  color: #22ee22;
  stroke: #22ee22;
  stroke-width: 0.5px;
}

/* autoclaves */
.clave {
  display: flex;
  align-items: flex-start;
  padding-top: 3px;
}
.ids {
  width: 48px;
  background: #00ff00;
  color: #032;
  font: bold 20px 'Liberation Serif', serif;
  text-align: center;
  display: flex;
  flex-direction: column;
}
.ids span {
  height: 29.9px;
  line-height: 34px;
  flex: none;
}
.ids.left {
  height: 378px;
}
.ids.right {
  height: 378px;
  margin-top: 4px;
}
.ids.right span {
  line-height: 26px;
}
.lane {
  margin-top: 1px;
}
.lane.in {
  width: 449px;
  margin-left: 2px;
  background: #222;
}
.lane.out {
  width: 456px;
  background: linear-gradient(90deg, #222 449px, #000 449px);
}
.row {
  position: relative;
  display: flex;
  align-items: center;
  height: 29.85px;
  box-sizing: border-box;
  border-bottom: 1px dashed #4a4a4a;
}
.in .row {
  padding: 2px 0 0 3px;
}
.in .lbl {
  margin-left: auto;
  width: 123px;
}
.lbl {
  font: bold 19px 'Liberation Serif', serif;
  letter-spacing: 0.3px;
  white-space: nowrap;
  color: #fff;
}
.cell {
  flex: none;
  width: 45px;
  height: 26px;
  margin-right: 1px;
  box-sizing: border-box;
  border: 4px solid #6e6e6e;
  background: #dcdcdc;
  color: #222;
  font: normal 12px/19px 'DejaVu Sans', sans-serif;
  text-align: center;
  -webkit-text-stroke: 0.4px #222;
}
.out .row {
  padding-left: 33px;
}
.out .lbl {
  width: 99px;
}
.cells {
  display: flex;
  width: 322px;
}
.cells.tail {
  justify-content: flex-end;
}
.badge {
  position: absolute;
  left: 132px;
  top: 3px;
  width: 47px;
  height: 22px;
  box-sizing: border-box;
  border: 1px solid #000;
  color: #0c0c0c;
  font: bold 12px/20px 'DejaVu Sans', sans-serif;
  text-align: center;
}
.badge.ghost {
  top: 4px;
}
.mid {
  width: 381px;
  margin-top: 2px;
  display: flex;
  flex-direction: column;
  gap: 1.9px;
  padding: 0 1px;
  box-sizing: border-box;
}
.pill {
  height: 28px;
  box-sizing: border-box;
  border: 1px dashed #c8f0c8;
  border-radius: 7px;
  background: #00ff00;
  color: #021;
  display: flex;
  align-items: center;
  padding-left: 5px;
}
.pill.off {
  background: #000;
  border-color: #aaa;
}
.pill.warn {
  background: #ffff00;
}
.time {
  width: 156px;
  margin-left: -2px;
  font-weight: bold;
  color: #020;
}
.warn .time {
  width: 161px;
  margin-left: -7px;
}
.pill .lbl {
  color: #053005;
}
.temps {
  margin: 3px 0 0 25px;
  display: flex;
  flex-direction: column;
  gap: 5.9px;
}
.temps span {
  width: 46px;
  height: 24px;
  box-sizing: border-box;
  padding-left: 2px;
  line-height: 25px;
  overflow: hidden;
  background: #dcdcdc;
  color: #7a5200;
  font-family: 'Liberation Sans', sans-serif;
  font-weight: bold;
  font-size: 24.5px;
}

/* mimic fonts */
.v,
.vb {
  font-family: 'DejaVu Sans', sans-serif;
}
.t,
.tb {
  font-family: 'DejaVu Sans Condensed', 'DejaVu Sans', sans-serif;
}
.ab {
  font-family: 'Liberation Sans', sans-serif;
}
.s {
  font-family: 'Liberation Serif', serif;
}
.m {
  font-family: 'DejaVu Sans Mono', monospace;
}
.vb,
.tb,
.ab,
.s,
.m {
  font-weight: bold;
}
.v {
  stroke-width: 0.35px;
}
.c {
  text-anchor: middle;
}
</style>
